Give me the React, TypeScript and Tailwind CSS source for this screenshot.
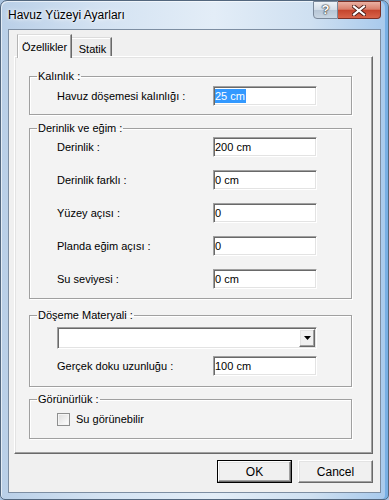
// "Havuz Yüzeyi Ayarları" dialog, Vista Aero frame with classic 3D controls.
const field =
  "flex h-[20px] w-[104px] items-center border border-t-[#a0a0a0] border-l-[#a0a0a0] border-b-white border-r-white bg-white pl-[1px] shadow-[inset_1px_1px_0_#696969,inset_-1px_-1px_0_#e3e3e3]";
const raised =
  "border border-t-white border-l-white border-b-[#696969] border-r-[#696969] shadow-[inset_-1px_-1px_0_#a0a0a0,inset_1px_1px_0_#e3e3e3]";

function Group({ title, className, children }: { title: string; className?: string; children: React.ReactNode }) {
  return (
    <fieldset
      className={
        "ml-[14px] w-[323px] border border-[#a0a0a0] shadow-[1px_1px_0_#fff,inset_1px_1px_0_#fff] " + (className ?? "")
      }
    >
      <legend className="ml-[7px] px-[1px] text-[11px] leading-[13px]">{title}</legend>
      {children}
    </fieldset>
  );
}

function Row({ label, value, selected }: { label: string; value: string; selected?: boolean }) {
  return (
    <div className="flex h-[20px] items-center pl-[27px]">
      <span className="w-[156px] leading-[13px]">{label}</span>
      <div className={field}>
        {selected ? <span className="bg-[#3399ff] pr-[1px] leading-[14px] text-white">{value}</span> : value}
      </div>
    </div>
  );
}

export default function App() {
  return (
    <div className="h-[500px] w-[389px] overflow-hidden bg-[#a9c3df] font-['Liberation_Sans',Arial,sans-serif] text-[11px] text-black">
      <div className="flex h-[500px] w-[389px] flex-col rounded-t-[7px] rounded-b-[5px] border border-[#53677e] bg-[linear-gradient(90deg,#b9cfe7_0%,#d3e2f2_25%,#e3edf7_55%,#cfe0f1_80%,#a7c9ec_100%)] px-[7px] pb-[6px] shadow-[inset_-3px_0_0_#78afe4,inset_1px_1px_0_rgba(255,255,255,0.6)]">
        {/* title bar */}
        <div className="flex h-[28px] items-start">
          <div className="mt-[7px] flex-1 text-[12px] leading-[15px] [text-shadow:0_0_6px_#fff,0_0_3px_#fff]">
            Havuz Yüzeyi Ayarları
          </div>
          <div className="flex h-[18px] w-[25px] items-center justify-center rounded-bl-[4px] border border-[#7a889a] bg-[linear-gradient(180deg,#eef3f8_0%,#d3dde8_48%,#b7c6d6_52%,#c9d6e3_100%)]">
            <span className="text-[13px] font-bold leading-[14px] text-white [text-shadow:0_0_1px_#333,0_0_1px_#333,0_0_2px_#333]">
              ?
            </span>
          </div>
          <div className="flex h-[18px] w-[43px] items-center justify-center rounded-br-[4px] border border-l-0 border-[#7b3026] bg-[linear-gradient(180deg,#eab1a3_0%,#d9806c_45%,#c5452d_52%,#d8644a_100%)]">
            <svg width="14" height="11" viewBox="0 0 14 11">
              <path d="M2 1.5 L12 9.5 M12 1.5 L2 9.5" stroke="#4a1c16" strokeWidth="4" strokeLinecap="square" />
              <path d="M2 1.5 L12 9.5 M12 1.5 L2 9.5" stroke="#fff" strokeWidth="2.2" strokeLinecap="square" />
            </svg>
          </div>
        </div>

        {/* client area */}
        <div className="flex flex-1 flex-col border border-[#7d8ea2] bg-[#f0f0f0]">
          {/* tab headers */}
          <div className="flex h-[26px] items-end pl-[8px]">
            <div className="relative z-10 -mb-[2px] flex h-[24px] w-[55px] items-start justify-center border border-b-0 border-t-[#dcdcdc] border-l-[#b4b4b4] border-r-[#696969] bg-[#f3f3f3] pt-[4px] shadow-[inset_-1px_0_0_#a0a0a0,inset_1px_1px_0_#fff]">
              Özellikler
            </div>
            <div className="flex h-[19px] w-[40px] items-start justify-center border border-b-0 border-l-0 border-t-[#dcdcdc] border-r-[#696969] bg-[#ececec] pt-[3px] pl-[2px] shadow-[inset_-1px_0_0_#a0a0a0,inset_0_1px_0_#fff]">
              Statik
            </div>
          </div>

          {/* tab panel */}
          <div className={"ml-[5px] h-[398px] w-[359px] bg-[#f3f3f3] " + raised}>
            <Group title="Kalınlık :" className="mt-[13px] pb-[8px]">
              <div className="pt-[3px]">
                <Row label="Havuz döşemesi kalınlığı :" value="25 cm" selected />
              </div>
            </Group>

            <Group title="Derinlik ve eğim :" className="mt-[7px] pb-[9px]">
              <div className="flex flex-col gap-[13px] pt-[2px]">
                <Row label="Derinlik :" value="200 cm" />
                <Row label="Derinlik farklı :" value="0 cm" />
                <Row label="Yüzey açısı :" value="0" />
                <Row label="Planda eğim açısı  :" value="0" />
                <Row label="Su seviyesi :" value="0 cm" />
              </div>
            </Group>

            <Group title="Döşeme Materyali  :" className="mt-[10px] pb-[10px]">
              <div className="flex flex-col gap-[7px] pt-[5px]">
                <div className="ml-[27px] flex h-[22px] w-[260px] justify-end border border-t-[#a0a0a0] border-l-[#a0a0a0] border-b-white border-r-white bg-white p-[1px] shadow-[inset_1px_1px_0_#696969,inset_-1px_-1px_0_#e3e3e3]">
                  <div className={"flex h-full w-[16px] items-center justify-center bg-[#f0f0f0] " + raised}>
                    <svg width="7" height="4" viewBox="0 0 7 4">
                      <path d="M0 0 H7 L3.5 4 Z" fill="#000" />
                    </svg>
                  </div>
                </div>
                <Row label="Gerçek doku uzunluğu :" value="100 cm" />
              </div>
            </Group>

            <Group title="Görünürlük :" className="mt-[6px] pb-[12px]">
              <div className="flex h-[13px] items-center gap-[6px] pl-[27px] mt-[7px]">
                <div className="h-[13px] w-[13px] border border-[#8e8f8f] bg-[linear-gradient(135deg,#dcdcdc,#fff)] shadow-[inset_0_0_0_1px_#f4f4f4]" />
                <span className="leading-[13px]">Su görünebilir</span>
              </div>
            </Group>
          </div>

          {/* dialog buttons */}
          <div className="mt-[6px] flex justify-end gap-[6px] pr-[7px]">
            <div className="h-[23px] w-[75px] border border-black">
              <div className={"flex h-full w-full items-center justify-center bg-[#f0f0f0] text-[12px] " + raised}>OK</div>
            </div>
            <div className={"flex h-[23px] w-[75px] items-center justify-center bg-[#f0f0f0] text-[12px] " + raised}>
              Cancel
            </div>
          </div>
        </div>
      </div>
    </div>
  );
}
